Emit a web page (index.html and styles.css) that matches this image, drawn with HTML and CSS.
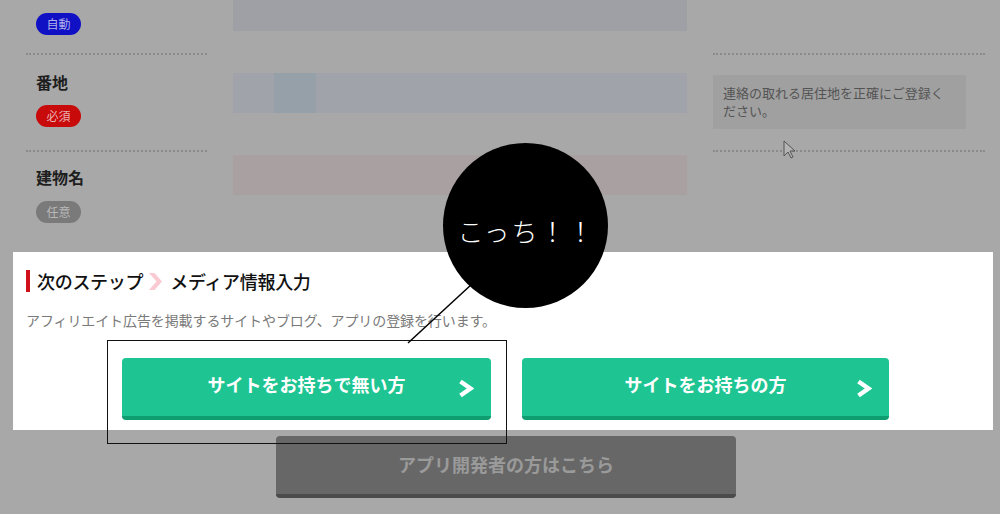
FILE: index.html
```html
<!DOCTYPE html>
<html lang="ja">
<head>
  <meta charset="UTF-8">
  <title>会員登録</title>
  <link rel="stylesheet" href="styles.css">
</head>
<body>
  <div class="form">
    <div class="cell-label line">
      <span class="badge badge-auto">自動</span>
    </div>
    <div class="cell-field first">
      <div class="input input-auto"></div>
    </div>
    <div class="cell-hint line"></div>

    <div class="cell-label line row2">
      <div class="label">番地</div>
      <span class="badge badge-req">必須</span>
    </div>
    <div class="cell-field row2">
      <div class="input input-addr"><span class="caret"></span></div>
    </div>
    <div class="cell-hint line row2">
      <p class="hint">連絡の取れる居住地を正確にご登録ください。</p>
    </div>

    <div class="cell-label row3">
      <div class="label">建物名</div>
      <span class="badge badge-opt">任意</span>
    </div>
    <div class="cell-field row3">
      <div class="input input-bldg"></div>
    </div>
    <div class="cell-hint row3"></div>
  </div>

  <section class="next">
    <h2 class="next-title">
      次のステップ
      <svg class="next-arrow" width="15" height="17" viewBox="0 0 15 17"><path d="M1 0h5.5l7.5 8.5-7.5 8.5H1l7.5-8.5z" fill="#fbc9d2"/></svg>
      メディア情報入力
    </h2>
    <p class="next-desc">アフィリエイト広告を掲載するサイトやブログ、アプリの登録を行います。</p>
    <div class="next-buttons">
      <a class="btn-green">サイトをお持ちで無い方<svg class="chev" width="16" height="19" viewBox="0 0 16 19"><path d="M2.5 2.5l10 7-10 7" fill="none" stroke="#fff" stroke-width="4.5"/></svg></a>
      <a class="btn-green btn-right">サイトをお持ちの方<svg class="chev" width="16" height="19" viewBox="0 0 16 19"><path d="M2.5 2.5l10 7-10 7" fill="none" stroke="#fff" stroke-width="4.5"/></svg></a>
    </div>
  </section>

  <a class="btn-dev">アプリ開発者の方はこちら</a>

  <!-- annotation layer -->
  <div class="note-box"></div>
  <svg class="note-line" width="1000" height="514"><line x1="408" y1="343" x2="472" y2="284" stroke="#000" stroke-width="1.5"/></svg>
  <div class="note-circle">こっち！！</div>
  <svg class="cursor" width="14" height="20" viewBox="0 0 14 20"><path d="M1 1v15l4-4 3 6 2-1-3-6h5z" fill="#b4b4b4" stroke="#555" stroke-width="1"/></svg>
</body>
</html>
```

FILE: styles.css
```css
body {margin: 0; background: #a8a8a8; font-family: "Noto Sans CJK JP", sans-serif; color: #1e1e1e; position: relative; height: 514px; overflow: hidden;}

.form {display: grid; grid-template-columns: 181px 454px 272px; column-gap: 26px; grid-template-rows: 55px 97px 100px; padding-left: 26px;}
.line {border-bottom: 2px dotted #8a8a8a;}
.cell-label {padding-left: 10px;}
.cell-label:first-child {padding-top: 10px;}
.cell-field.first {padding-top: 0;}
.row2.cell-label {padding-top: 17px;}
.row2.cell-field {padding-top: 18px;}
.row2.cell-hint {padding-top: 20px;}
.row3.cell-label {padding-top: 15px;}
.row3.cell-field {padding-top: 3px;}

.label {font-size: 16px; line-height: 20px; font-weight: bold; color: #1e1e1e; margin-bottom: 10px;}
.row3 .label {margin-bottom: 11px;}
.badge {display: inline-block; width: 45px; height: 22px; line-height: 22px; border-radius: 11px; font-size: 12px; text-align: center;}
.badge-auto {background: #1010c4; color: #b0b0e8;}
.badge-req {background: #c80a0a; color: #e8b0b0;}
.badge-opt {background: #7a7a7a; color: #b8b8b8;}

.input {height: 40px;}
.input-auto {height: 31px; background: #9ea0a6;}
.input-addr {background: #a0a3a9; position: relative;}
.caret {position: absolute; left: 41px; top: 0; width: 42px; height: 40px; background: #96a0a9;}
.input-bldg {background: #a9a1a1;}

.hint {width: 233px; margin: 0; padding: 9px 10px 9px; background: #a0a0a0; font-size: 13px; line-height: 18px; color: #545454;}

.next {margin: 0 7px 0 13px; background: #fff; padding: 18px 13px 10px; height: 150px;}
.next-title {margin: 0; font-size: 18px; line-height: 22px; font-weight: 500; color: #111; border-left: 4px solid #d0101a; padding-left: 7px; display: flex; align-items: center; letter-spacing: -0.3px;}
.next-arrow {margin: 0 7px 0 5px;}
.next-desc {margin: 18px 0 0; font-size: 14px; line-height: 20px; color: #7a7a7a; letter-spacing: -0.1px;}
.next-buttons {display: flex; gap: 31px; margin: 28px 0 0 96px;}

.btn-green {position: relative; display: block; width: 369px; height: 58px; line-height: 52px; background: #1ec592; border-bottom: 4px solid #0f9d70; border-radius: 4px; color: #fff; font-size: 18px; font-weight: bold; text-align: center;}
.btn-right {width: 367px;}
.chev {position: absolute; right: 17px; top: 21px;}

.btn-dev {display: block; width: 460px; height: 58px; margin: 6px 0 0 276px; line-height: 56px; background: #676767; border-bottom: 4px solid #4b4b4b; border-radius: 4px; color: #9a9a9a; font-size: 18px; font-weight: bold; text-align: center;}

.note-box {position: absolute; left: 107px; top: 340px; width: 398px; height: 102px; border: 1.5px solid #111;}
.note-line {position: absolute; left: 0; top: 0;}
.note-circle {position: absolute; left: 443px; top: 143px; width: 165px; height: 165px; border-radius: 50%; background: #000; color: #fff; font-size: 26px; font-weight: 300; letter-spacing: 2px; text-align: center; line-height: 176px; text-indent: 2px;}
.cursor {position: absolute; left: 783px; top: 140px;}
```
